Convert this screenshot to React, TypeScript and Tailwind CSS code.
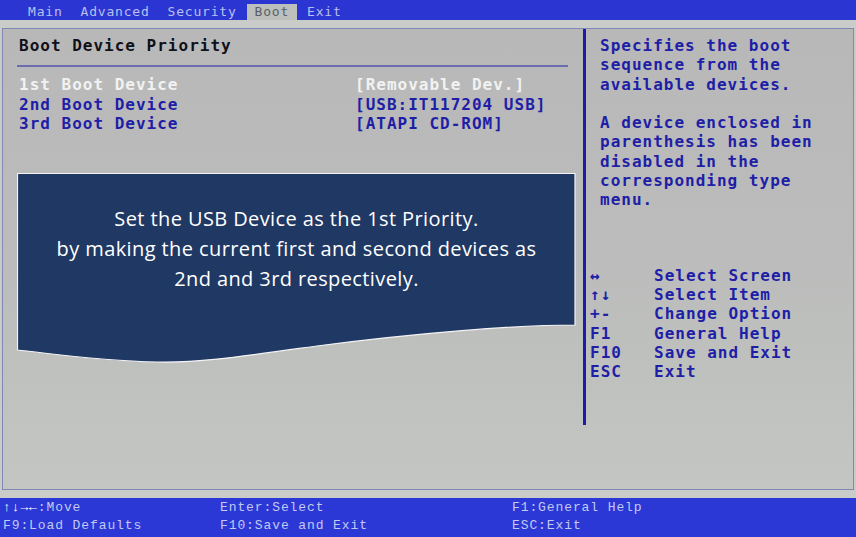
import React from "react";

const tabs = ["Main", "Advanced", "Security", "Boot", "Exit"];

const devices = [
  { label: "1st Boot Device", value: "[Removable Dev.]", active: true },
  { label: "2nd Boot Device", value: "[USB:IT117204 USB]", active: false },
  { label: "3rd Boot Device", value: "[ATAPI CD-ROM]", active: false },
];

const helpText = [
  "Specifies the boot",
  "sequence from the",
  "available devices.",
  "",
  "A device enclosed in",
  "parenthesis has been",
  "disabled in the",
  "corresponding type",
  "menu.",
];

const keys = [
  { key: "↔", desc: "Select Screen" },
  { key: "↑↓", desc: "Select Item" },
  { key: "+-", desc: "Change Option" },
  { key: "F1", desc: "General Help" },
  { key: "F10", desc: "Save and Exit" },
  { key: "ESC", desc: "Exit" },
];

const footer = [
  ["↑↓→←:Move", "Enter:Select", "F1:General Help"],
  ["F9:Load Defaults", "F10:Save and Exit", "ESC:Exit"],
];

const bios = "font-['DejaVu_Sans_Mono',monospace] font-bold text-[16px] tracking-[1px] leading-[19.3px]";

export default function App() {
  return (
    <div className="relative flex h-[537px] w-[856px] flex-col overflow-hidden bg-[#c8cbc8]">
      {/* menu bar */}
      <div className="flex h-[20px] items-end gap-[2px] bg-[#2b36d2] pl-[20px] font-['DejaVu_Sans_Mono',monospace] text-[13px] tracking-[0.8px]">
        {tabs.map((t) => (
          <div
            key={t}
            className={
              t === "Boot"
                ? "h-[16px] bg-[#bcbfbc] px-[8px] leading-[16px] text-[#5a5e6a]"
                : "h-[16px] px-[8px] leading-[16px] text-[#b9c0ee]"
            }
          >
            {t}
          </div>
        ))}
      </div>
      <div className="h-[8px] bg-[#c9ccc8]" />

      {/* main panel */}
      <div className="mx-[2px] flex h-[462px] border border-[#8088b4] bg-gradient-to-b from-[#b8b8b8] via-[#bbbcbb] to-[#c3c6c2]">
        <div className="w-[580px] shrink-0 pt-[7px]">
          <div className={`${bios} pl-[16px] text-[#101018]`}>Boot Device Priority</div>
          <div className="ml-[14px] mt-[10px] h-[2px] w-[551px] bg-[#6c6cb0]" />
          <div className="mt-[8px] pl-[16px]">
            {devices.map((d) => (
              <div
                key={d.label}
                className={`grid grid-cols-[336px_1fr] ${bios} ${d.active ? "text-[#f2f2f2]" : "text-[#1e1ea6]"}`}
              >
                <span>{d.label}</span>
                <span>{d.value}</span>
              </div>
            ))}
          </div>
        </div>

        <div className="h-[396px] w-[3px] shrink-0 bg-[#1c1caa]" />

        <div className="flex-1 pt-[7px]">
          <div className={`${bios} pl-[14px] text-[#1e1ea6]`}>
            {helpText.map((line, i) => (
              <div key={i} className="h-[19.3px]">
                {line}
              </div>
            ))}
          </div>
          <div className="mt-[56px] pl-[4px]">
            {keys.map((k) => (
              <div key={k.desc} className={`flex ${bios} text-[#1e1ea6]`}>
                <span className="w-[64px]">{k.key}</span>
                <span>{k.desc}</span>
              </div>
            ))}
          </div>
        </div>
      </div>

      <div className="h-[8px] bg-[#c9ccc8]" />

      {/* status bar */}
      <div className="flex-1 bg-[#2b38d6] pt-[1px] font-['Liberation_Mono',monospace] text-[13px] tracking-[0.9px] leading-[18px] text-[#c3c9f0]">
        {footer.map((row, i) => (
          <div key={i} className="grid grid-cols-[217px_292px_1fr] pl-[3px]">
            {row.map((c, j) => (
              <span key={j}>
                {i === 0 && j === 0 ? (
                  <>
                    <span className="font-bold text-white">↑↓→←</span>:Move
                  </>
                ) : (
                  c
                )}
              </span>
            ))}
          </div>
        ))}
      </div>

      {/* callout over the screen */}
      <div className="absolute left-[17px] top-[173px] h-[192px] w-[559px]">
        <svg className="absolute inset-0" width="559" height="192" viewBox="0 0 559 192">
          <path
            d="M0.5 0.5 H558 V152 C500 152 400 160 300 173 C220 184 180 190 140 189 C80 188 30 180 0.5 177 Z"
            fill="#1f3864"
            stroke="#f4f4f4"
            strokeWidth="1.2"
          />
        </svg>
        <div className="relative pt-[31px] text-center font-['Open_Sans',sans-serif] text-[20px] tracking-[0.4px] leading-[30px] text-white">
          <div>Set the USB Device as the 1st Priority.</div>
          <div>by making the current first and second devices as</div>
          <div>2nd and 3rd respectively.</div>
        </div>
      </div>
    </div>
  );
}
